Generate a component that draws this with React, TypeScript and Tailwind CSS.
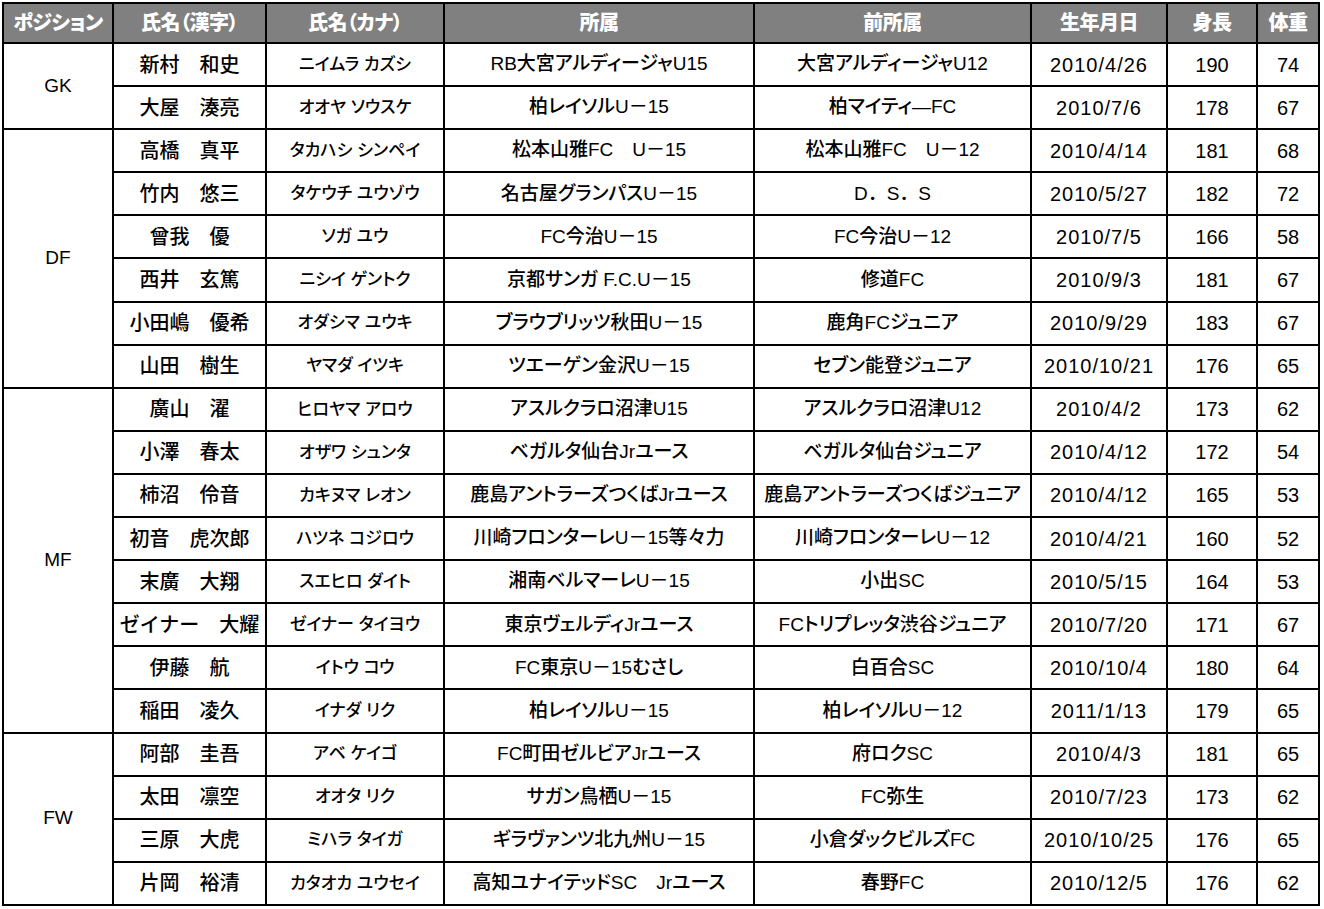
import React from 'react'

interface Player {
  kanji: string
  kana: string
  club: string
  prev: string
  birth: string
  height: number
  weight: number
}

interface Group {
  pos: string
  players: Player[]
}

const groups: Group[] = [
  {
    pos: 'GK',
    players: [
      { kanji: '新村　和史', kana: 'ニイムラ カズシ', club: 'RB大宮アルディージャU15', prev: '大宮アルディージャU12', birth: '2010/4/26', height: 190, weight: 74 },
      { kanji: '大屋　湊亮', kana: 'オオヤ ソウスケ', club: '柏レイソルU－15', prev: '柏マイティ—FC', birth: '2010/7/6', height: 178, weight: 67 },
    ],
  },
  {
    pos: 'DF',
    players: [
      { kanji: '高橋　真平', kana: 'タカハシ シンペイ', club: '松本山雅FC　U－15', prev: '松本山雅FC　U－12', birth: '2010/4/14', height: 181, weight: 68 },
      { kanji: '竹内　悠三', kana: 'タケウチ ユウゾウ', club: '名古屋グランパスU－15', prev: 'D．S．S', birth: '2010/5/27', height: 182, weight: 72 },
      { kanji: '曾我　優', kana: 'ソガ ユウ', club: 'FC今治U－15', prev: 'FC今治U－12', birth: '2010/7/5', height: 166, weight: 58 },
      { kanji: '西井　玄篤', kana: 'ニシイ ゲントク', club: '京都サンガ F.C.U－15', prev: '修道FC', birth: '2010/9/3', height: 181, weight: 67 },
      { kanji: '小田嶋　優希', kana: 'オダシマ ユウキ', club: 'ブラウブリッツ秋田U－15', prev: '鹿角FCジュニア', birth: '2010/9/29', height: 183, weight: 67 },
      { kanji: '山田　樹生', kana: 'ヤマダ イツキ', club: 'ツエーゲン金沢U－15', prev: 'セブン能登ジュニア', birth: '2010/10/21', height: 176, weight: 65 },
    ],
  },
  {
    pos: 'MF',
    players: [
      { kanji: '廣山　濯', kana: 'ヒロヤマ アロウ', club: 'アスルクラロ沼津U15', prev: 'アスルクラロ沼津U12', birth: '2010/4/2', height: 173, weight: 62 },
      { kanji: '小澤　春太', kana: 'オザワ シュンタ', club: 'ベガルタ仙台Jrユース', prev: 'ベガルタ仙台ジュニア', birth: '2010/4/12', height: 172, weight: 54 },
      { kanji: '柿沼　伶音', kana: 'カキヌマ レオン', club: '鹿島アントラーズつくばJrユース', prev: '鹿島アントラーズつくばジュニア', birth: '2010/4/12', height: 165, weight: 53 },
      { kanji: '初音　虎次郎', kana: 'ハツネ コジロウ', club: '川崎フロンターレU－15等々力', prev: '川崎フロンターレU－12', birth: '2010/4/21', height: 160, weight: 52 },
      { kanji: '末廣　大翔', kana: 'スエヒロ ダイト', club: '湘南ベルマーレU－15', prev: '小出SC', birth: '2010/5/15', height: 164, weight: 53 },
      { kanji: 'ゼイナー　大耀', kana: 'ゼイナー タイヨウ', club: '東京ヴェルディJrユース', prev: 'FCトリプレッタ渋谷ジュニア', birth: '2010/7/20', height: 171, weight: 67 },
      { kanji: '伊藤　航', kana: 'イトウ コウ', club: 'FC東京U－15むさし', prev: '白百合SC', birth: '2010/10/4', height: 180, weight: 64 },
      { kanji: '稲田　凌久', kana: 'イナダ リク', club: '柏レイソルU－15', prev: '柏レイソルU－12', birth: '2011/1/13', height: 179, weight: 65 },
    ],
  },
  {
    pos: 'FW',
    players: [
      { kanji: '阿部　圭吾', kana: 'アベ ケイゴ', club: 'FC町田ゼルビアJrユース', prev: '府ロクSC', birth: '2010/4/3', height: 181, weight: 65 },
      { kanji: '太田　凛空', kana: 'オオタ リク', club: 'サガン鳥栖U－15', prev: 'FC弥生', birth: '2010/7/23', height: 173, weight: 62 },
      { kanji: '三原　大虎', kana: 'ミハラ タイガ', club: 'ギラヴァンツ北九州U－15', prev: '小倉ダックビルズFC', birth: '2010/10/25', height: 176, weight: 65 },
      { kanji: '片岡　裕清', kana: 'カタオカ ユウセイ', club: '高知ユナイテッドSC　Jrユース', prev: '春野FC', birth: '2010/12/5', height: 176, weight: 62 },
    ],
  },
]

const headers = ['ポジション', '氏名（漢字）', '氏名（カナ）', '所属', '前所属', '生年月日', '身長', '体重']

// full-width dots keep their width (no proportional kerning)
const isWide = (s: string) => s.includes('．')

export default function App() {
  return (
    <div className="w-[1324px] h-[909px] bg-white text-black font-['Liberation_Sans','Noto_Sans_CJK_JP',sans-serif]">
      <table className="table-fixed border-collapse w-[1316px] ml-[2px] mt-[2px]">
        <colgroup>
          <col className="w-[110px]" />
          <col className="w-[153px]" />
          <col className="w-[178px]" />
          <col className="w-[310px]" />
          <col className="w-[277px]" />
          <col className="w-[136px]" />
          <col className="w-[90px]" />
          <col className="w-[62px]" />
        </colgroup>
        <thead>
          <tr className="h-[40px] bg-[#808080]">
            {headers.map(h => (
              <th key={h} className="border-2 border-black text-white font-black text-[20px] text-center p-0 leading-none tracking-[-0.5px] [font-feature-settings:'palt']">
                {h}
              </th>
            ))}
          </tr>
        </thead>
        <tbody className="font-medium">
          {groups.map(g =>
            g.players.map((p, i) => (
              <tr key={p.kanji} className="h-[43.1px]">
                {i === 0 && (
                  <td rowSpan={g.players.length} className="border-2 border-black text-center text-[19px] p-0">
                    {g.pos}
                  </td>
                )}
                <td className="border-2 border-black text-center text-[20px] p-0 whitespace-nowrap">{p.kanji}</td>
                <td className="border-2 border-black text-center text-[17px] p-0 whitespace-nowrap [font-feature-settings:'palt']">{p.kana}</td>
                <td className="border-2 border-black text-center text-[19px] p-0 whitespace-nowrap [font-feature-settings:'palt']">{p.club}</td>
                <td className={`border-2 border-black text-center text-[19px] p-0 whitespace-nowrap ${isWide(p.prev) ? '' : "[font-feature-settings:'palt']"}`}>{p.prev}</td>
                <td className="border-2 border-black text-center text-[20px] p-0 tracking-[1px]">{p.birth}</td>
                <td className="border-2 border-black text-center text-[20px] p-0">{p.height}</td>
                <td className="border-2 border-black text-center text-[20px] p-0">{p.weight}</td>
              </tr>
            ))
          )}
        </tbody>
      </table>
    </div>
  )
}
